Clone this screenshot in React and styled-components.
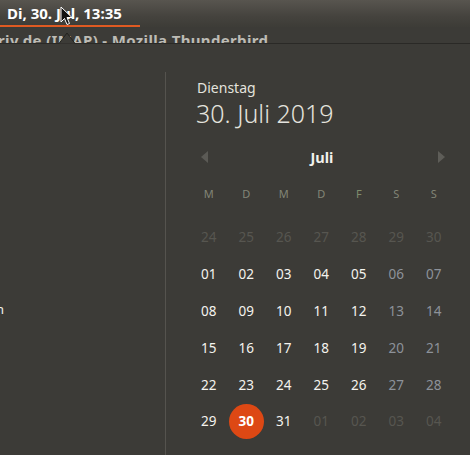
import React from "react";
import styled, {createGlobalStyle} from "styled-components";

const GlobalStyle = createGlobalStyle`
   html, body {
      margin: 0;
      padding: 0;
      background: #3c3b37;
   }
   body {
      font-family: "Noto Sans", "DejaVu Sans", sans-serif;
   }
`;

const Screen = styled.div`
   position: relative;
   width: 470px;
   height: 455px;
   overflow: hidden;
   background: #3c3b37;
   display: flex;
   flex-direction: column;
`;

const TopPanel = styled.div`
   height: 27px;
   flex: none;
   display: flex;
   background: linear-gradient(180deg, #58554f 0%, #45433e 60%, #3d3c37 100%);
`;

const ClockItem = styled.div`
   width: 140px;
   box-sizing: border-box;
   padding: 3px 0 0 7px;
   border-bottom: 2px solid #e05a22;
   height: 27px;
   font-size: 15px;
   font-weight: 700;
   color: #ffffff;
   white-space: nowrap;
`;

const TitleStrip = styled.div`
   height: 16px;
   flex: none;
   overflow: hidden;
   background: #3c3b37;
   border-bottom: 1px solid #2a2926;
`;

const TitleText = styled.div`
   padding-top: 3px;
   margin-left: -2px;
   font-size: 15px;
   font-weight: 700;
   letter-spacing: 0.35px;
   color: #bdbbb5;
   white-space: nowrap;
`;

const PopupArrow = styled.svg`
   position: absolute;
   left: 59px;
   top: 32px;
`;

const Cursor = styled.svg`
   position: absolute;
   left: 60px;
   top: 6px;
`;

const Body = styled.div`
   flex: 1;
   display: flex;
`;

const LeftPane = styled.div`
   width: 165px;
   flex: none;
   padding-top: 256px;
   overflow: hidden;
`;

const ClippedItem = styled.div`
   width: 4px;
   overflow: hidden;
   display: flex;
   justify-content: flex-end;
   font-size: 13px;
   color: #f2f1ec;
   white-space: nowrap;
`;

const Divider = styled.div`
   width: 1px;
   flex: none;
   margin-top: 28px;
   background: #55534e;
`;

const CalendarPane = styled.div`
   flex: 1;
   padding: 35px 0 0 24px;
   display: flex;
   flex-direction: column;
`;

const DayName = styled.div`
   padding-left: 7px;
   font-size: 14px;
   line-height: 18px;
   color: #e4e3de;
`;

const FullDate = styled.div`
   padding-left: 6px;
   font-size: 25px;
   font-weight: 300;
   line-height: 34px;
   margin-top: -1px;
   color: #e4e3de;
`;

const NavRow = styled.div`
   width: 262px;
   margin-top: 18px;
   height: 18px;
   display: flex;
   align-items: center;
   justify-content: space-between;
   padding: 0 7px 0 11px;
   box-sizing: border-box;
`;

const MonthLabel = styled.div`
   font-size: 14.5px;
   font-weight: 700;
   color: #f2f1ec;
   margin-right: 2px;
`;

const Grid = styled.div`
   width: 262px;
   display: grid;
   grid-template-columns: repeat(7, 37.5px);
`;

const HeaderGrid = styled(Grid)`
   margin-top: 18px;
   height: 18px;
   align-items: center;
`;

const DayGrid = styled(Grid)`
   margin-top: 17px;
   grid-auto-rows: 36.8px;
`;

const WeekLetter = styled.div`
   text-align: center;
   font-size: 11px;
   color: ${p => p.$friday ? "#7f8c6c" : "#828576"};
`;

const DAY_COLORS = {
   dim: "#575650",
   weekend: "#8d929a",
   normal: "#f4f3ee",
};

const Day = styled.div`
   display: flex;
   align-items: center;
   justify-content: center;
   font-size: 13.5px;
   color: ${p => DAY_COLORS[p.$kind]};
`;

const Today = styled.div`
   width: 35px;
   height: 35px;
   border-radius: 50%;
   background: #dd4814;
   color: #ffffff;
   font-weight: 700;
   display: flex;
   align-items: center;
   justify-content: center;
`;

const Arrow = ({dir}) => (
   <svg width="7" height="12" viewBox="0 0 7 12">
      {dir === "left"
         ? <polygon points="7,0 7,12 0,6" fill="#5b5a55"/>
         : <polygon points="0,0 0,12 7,6" fill="#5e5d58"/>}
   </svg>
);

const pad = n => String(n).padStart(2, "0");

const build_days = () => {
   const days = [];
   for (let d = 24; d <= 30; d++) days.push({label: pad(d), kind: "dim"});
   for (let d = 1; d <= 31; d++) {
      const col = (d - 1) % 7;
      days.push({label: pad(d), kind: col >= 5 ? "weekend" : "normal", today: d === 30});
   }
   for (let d = 1; d <= 4; d++) days.push({label: pad(d), kind: "dim"});
   return days;
};

const WEEK = ["M", "D", "M", "D", "F", "S", "S"];

export default function App() {
   const days = build_days();
   return (
      <Screen>
         <GlobalStyle/>
         <TopPanel>
            <ClockItem>Di, 30. Jul, 13:35</ClockItem>
         </TopPanel>
         <TitleStrip>
            <TitleText>riv.de (IMAP) - Mozilla Thunderbird</TitleText>
         </TitleStrip>
         <Body>
            <LeftPane>
               <ClippedItem><span>Information</span></ClippedItem>
            </LeftPane>
            <Divider/>
            <CalendarPane>
               <DayName>Dienstag</DayName>
               <FullDate>30. Juli 2019</FullDate>
               <NavRow>
                  <Arrow dir="left"/>
                  <MonthLabel>Juli</MonthLabel>
                  <Arrow dir="right"/>
               </NavRow>
               <HeaderGrid>
                  {WEEK.map((w, i) => <WeekLetter key={i} $friday={i === 4}>{w}</WeekLetter>)}
               </HeaderGrid>
               <DayGrid>
                  {days.map((d, i) => (
                     <Day key={i} $kind={d.kind}>
                        {d.today ? <Today>{d.label}</Today> : d.label}
                     </Day>
                  ))}
               </DayGrid>
            </CalendarPane>
         </Body>
         <PopupArrow width="16" height="12" viewBox="0 0 16 12">
            <polygon points="0,11.5 8,1 16,11.5" fill="#3c3b37"/>
            <polyline points="0,11.5 8,1 16,11.5" fill="none" stroke="#24231f" strokeWidth="1"/>
         </PopupArrow>
         <Cursor width="13" height="20" viewBox="0 0 13 20">
            <polygon points="1,1 1,16 4.5,12.5 7,18.5 9.5,17.5 7,11.5 12,11.5" fill="#111" stroke="#fff" strokeWidth="1" strokeLinejoin="round"/>
         </Cursor>
      </Screen>
   );
}
